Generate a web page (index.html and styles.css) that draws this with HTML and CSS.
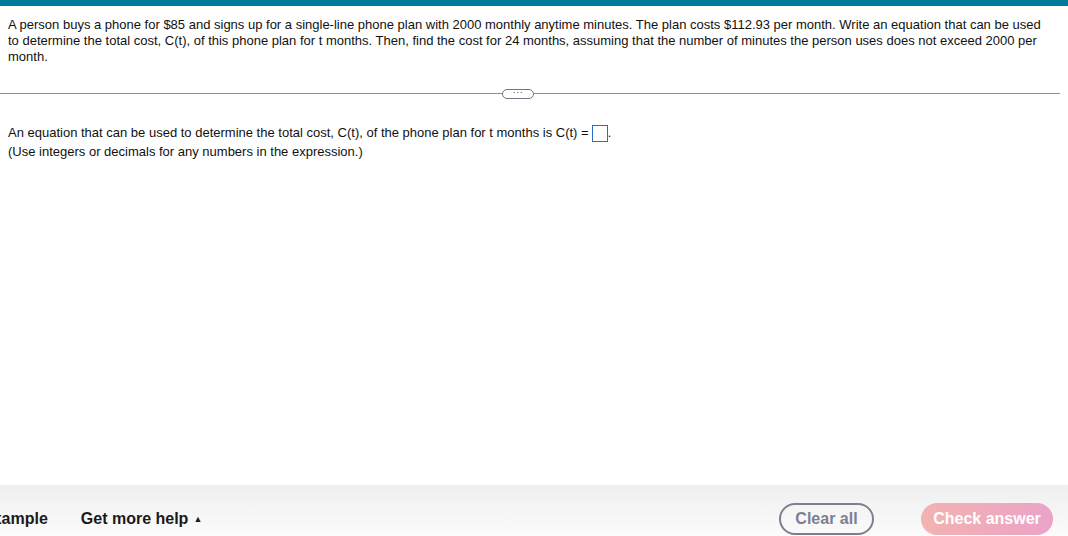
FILE: index.html
```html
<!DOCTYPE html>
<html>
<head>
<meta charset="utf-8">
<link rel="stylesheet" href="styles.css">
</head>
<body>
<div class="page">
  <div class="topbar"></div>
  <div class="question">A person buys a phone for $85 and signs up for a single-line phone plan with 2000 monthly anytime minutes. The plan costs $112.93 per month. Write an equation that can be used to determine the total cost, C(t), of this phone plan for t months. Then, find the cost for 24 months, assuming that the number of minutes the person uses does not exceed 2000 per month.</div>
  <div class="divider"><span class="pill">&middot;&middot;&middot;</span></div>
  <div class="answer">
    <div>An equation that can be used to determine the total cost, C(t), of the phone plan for t months is C(t) =<span class="box"></span>.</div>
    <div>(Use integers or decimals for any numbers in the expression.)</div>
  </div>
  <div class="spacer"></div>
  <div class="footer">
    <div class="left">
      <span class="example">Example</span>
      <span class="help">Get more help<span class="caret">&#9650;</span></span>
    </div>
    <div class="right">
      <button class="clear">Clear all</button>
      <button class="check">Check answer</button>
    </div>
  </div>
</div>
</body>
</html>
```
FILE: styles.css
```css
html, body { margin: 0; padding: 0; }
body {
  font-family: "Liberation Sans", Arial, sans-serif;
  color: #1a1a1a;
  background: #fff;
  width: 1068px;
  height: 536px;
  overflow: hidden;
}
.page { display: flex; flex-direction: column; height: 536px; }
.topbar { height: 6px; background: #007a9b; flex: none; }
.question {
  font-size: 13px;
  line-height: 16px;
  padding: 11px 20px 0 8px;
  color: #111;
}
.divider {
  margin: 28px 8px 0 0;
  border-top: 1px solid #8a8f98;
  position: relative;
  height: 0;
}
.pill {
  position: absolute;
  left: 502px;
  top: -5px;
  width: 30px;
  height: 8px;
  border: 1px solid #6f7682;
  border-radius: 5px;
  background: #fff;
  font-size: 9px;
  line-height: 5px;
  text-align: center;
  color: #333;
  letter-spacing: 0.5px;
}
.answer {
  font-size: 13px;
  line-height: 19px;
  padding: 29px 0 0 8px;
  color: #111;
}
.box {
  display: inline-block;
  width: 16px;
  height: 17px;
  border: 1px solid #2b6cc4;
  vertical-align: -5px;
  box-sizing: border-box;
  margin-left: 3px;
}
.spacer { flex: 1; }
.footer {
  height: 51px;
  flex: none;
  background: linear-gradient(#efefef, #fbfbfb);
  display: flex;
  justify-content: space-between;
  align-items: flex-start;
  padding-top: 18px;
  box-sizing: border-box;
}
.left { display: flex; align-items: center; height: 32px; margin-left: -18px; gap: 33px; }
.example, .help { font-size: 16px; font-weight: bold; color: #1a1a1a; }
.caret { font-size: 9px; vertical-align: 2px; margin-left: 5px; }
.right { display: flex; gap: 47px; margin-right: 15px; align-items: center; }
button { font-family: "Liberation Sans", Arial, sans-serif; font-weight: bold; font-size: 16px; cursor: pointer; }
.clear {
  width: 95px; height: 32px;
  border: 2px solid #7b8090;
  border-radius: 16px;
  background: transparent;
  color: #7b8090;
}
.check {
  width: 132px; height: 32px;
  border: none;
  border-radius: 16px;
  background: linear-gradient(90deg, #f2b3b0, #eba3c8);
  color: #fff;
}
```
